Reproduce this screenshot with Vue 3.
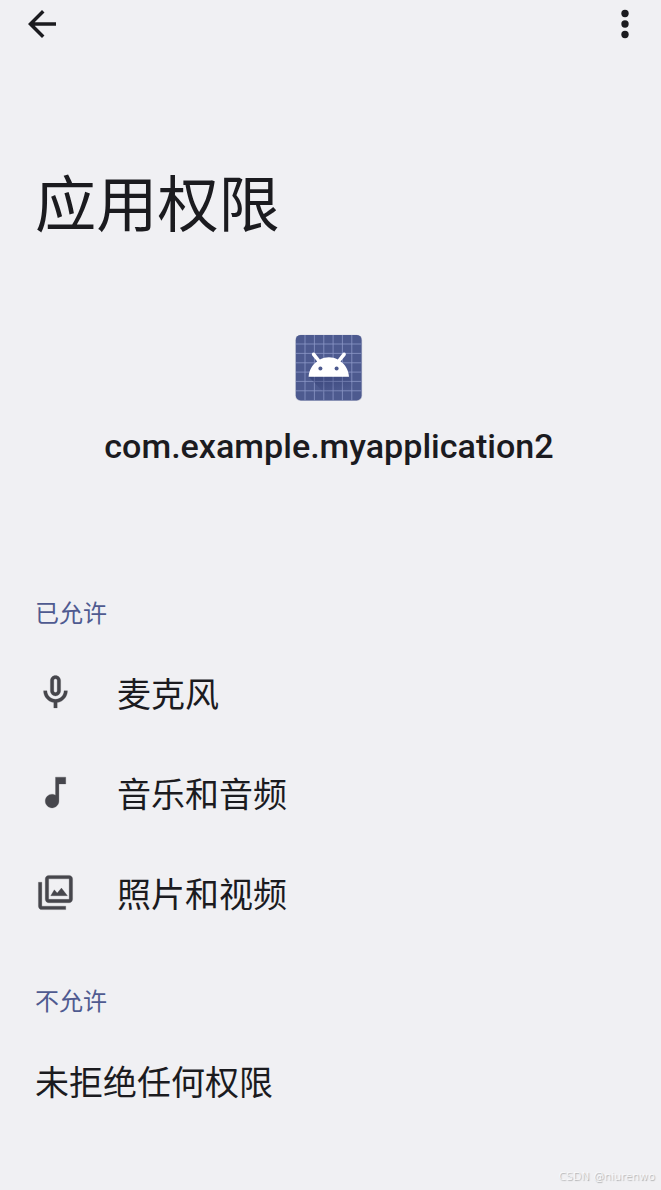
<template>
  <div class="page">
    <header class="toolbar">
      <button class="icon-btn" aria-label="返回">
        <svg class="icon" viewBox="0 0 24 24">
          <path d="M20 11H7.83l5.59-5.59L12 4l-8 8 8 8 1.41-1.41L7.83 13H20v-2z" />
        </svg>
      </button>
      <button class="icon-btn" aria-label="更多">
        <svg class="icon" viewBox="0 0 24 24">
          <circle cx="12" cy="6" r="2.1" />
          <circle cx="12" cy="12" r="2.1" />
          <circle cx="12" cy="18" r="2.1" />
        </svg>
      </button>
    </header>

    <h1 class="title">应用权限</h1>

    <section class="app">
      <svg class="app-icon" viewBox="0 0 68 68">
        <defs>
          <linearGradient id="shade" x1="0" y1="0" x2="0.5" y2="1">
            <stop offset="0" stop-color="#28336a" stop-opacity="0.5" />
            <stop offset="0.8" stop-color="#28336a" stop-opacity="0" />
          </linearGradient>
        </defs>
        <rect x="0.2" y="0.7" width="67" height="66.4" rx="5.5" fill="#c9cbd8" />
        <rect x="0.8" y="0.9" width="65.8" height="65.5" rx="5" fill="#4d5a8f" />
        <path class="grid" :d="gridPath" />
        <path d="M14 43 H54 L60 57 L50 66 H36 Z" fill="url(#shade)" />
        <path
          class="robot"
          d="M13.6 42.8 C14 36.2 17.2 30.6 22.2 27.4 L17.2 21.4 A1.7 1.7 0 0 1 20.1 19.2 L24.9 25.6 C30.6 22.6 37.3 22.6 42.8 25.6 L47.6 19.2 A1.7 1.7 0 0 1 50.5 21.4 L45.5 27.4 C50.5 30.6 53.6 36.2 54 42.8 Z"
        />
        <circle cx="25.4" cy="34.6" r="2" fill="#4d5a8f" />
        <circle cx="41.6" cy="34.6" r="2" fill="#4d5a8f" />
      </svg>
      <p class="app-name">com.example.myapplication2</p>
    </section>

    <h2 class="section">已允许</h2>
    <ul class="list">
      <li v-for="item in allowed" :key="item.label" class="row">
        <svg class="icon" viewBox="0 0 24 24">
          <path :d="item.icon" />
        </svg>
        <span>{{ item.label }}</span>
      </li>
    </ul>

    <h2 class="section denied">不允许</h2>
    <p class="empty">未拒绝任何权限</p>

    <div class="watermark">CSDN @niurenwo</div>
  </div>
</template>

<script setup>
const allowed = [
  {
    label: '麦克风',
    icon: 'M12 14c1.66 0 3-1.34 3-3V5c0-1.66-1.34-3-3-3S9 3.34 9 5v6c0 1.66 1.34 3 3 3zM11 5c0-.55.45-1 1-1s1 .45 1 1v6c0 .55-.45 1-1 1s-1-.45-1-1V5zM17 11c0 2.76-2.24 5-5 5s-5-2.24-5-5H5c0 3.53 2.61 6.43 6 6.92V21h2v-3.08c3.39-.49 6-3.39 6-6.92h-2z'
  },
  {
    label: '音乐和音频',
    icon: 'M12 3v10.55c-.59-.34-1.27-.55-2-.55-2.21 0-4 1.79-4 4s1.79 4 4 4 4-1.79 4-4V7h4V3h-6z'
  },
  {
    label: '照片和视频',
    icon: 'M20 4v12H8V4h12m0-2H8c-1.1 0-2 .9-2 2v12c0 1.1.9 2 2 2h12c1.1 0 2-.9 2-2V4c0-1.1-.9-2-2-2zM11.3 10.4l1.7 1.9 2.5-2.9L19 13.9H9.2l2.1-3.5zM2 6v14c0 1.1.9 2 2 2h14v-2H4V6H2z'
  }
];

// líneas de la cuadrícula del icono
const lines = [10, 19.4, 28.8, 38.1, 47.4, 56.8];
const gridPath = lines.map((n) => `M${n} 1V66.4M1 ${n}H66.4`).join('');
</script>

<style>
html, body { background: #f0f0f3; }
</style>

<style scoped>
.page {
  position: relative;
  box-sizing: border-box;
  width: 100%;
  height: 1190px;
  overflow: hidden;
  background: #f0f0f3;
  color: #1b1b1f;
  font-family: Roboto, "Noto Sans CJK SC", sans-serif;
}

h1, h2, p, ul {
  margin: 0;
  padding: 0;
  font-weight: 400;
}

.toolbar {
  display: flex;
  justify-content: space-between;
  padding: 3px 15px 0 21px;
}

.icon-btn {
  display: block;
  padding: 0;
  border: none;
  background: none;
  color: #1b1b1f;
}

.icon {
  display: block;
  flex: none;
  width: 41px;
  height: 41px;
  fill: currentColor;
}

.toolbar .icon {
  width: 42px;
  height: 42px;
}

.title {
  margin-top: 116px;
  padding-left: 35px;
  font-size: 61.2px;
  line-height: 90px;
}

.app {
  display: flex;
  flex-direction: column;
  align-items: center;
  margin-top: 83px;
  padding-right: 4px;
}

.app-icon {
  display: block;
  width: 68px;
  height: 68px;
}

.grid {
  fill: none;
  stroke: #8c97c6;
  stroke-width: 0.8;
}

.robot { fill: #fff; }

.app-name {
  margin-top: 24px;
  padding-left: 1px;
  font-size: 34.1px;
  font-weight: 500;
  line-height: 40px;
}

.section {
  margin-top: 128px;
  padding-left: 35px;
  color: #4f5a90;
  font-size: 24px;
  line-height: 40px;
}

.list {
  margin-top: 8px;
  list-style: none;
}

.row {
  display: flex;
  align-items: center;
  gap: 41.5px;
  height: 100px;
  padding-left: 34.5px;
  font-size: 34px;
}

.row .icon {
  color: #46464c;
  stroke: currentColor;
  stroke-width: 0.15;
}

.section.denied { margin-top: 40px; }

.empty {
  margin-top: 36px;
  padding-left: 35px;
  font-size: 34px;
  line-height: 50px;
}

.watermark {
  position: absolute;
  right: 6px;
  bottom: 5px;
  color: #fff;
  font-family: "DejaVu Sans", sans-serif;
  font-size: 11px;
  font-weight: 200;
  line-height: 16px;
  text-shadow: 1px 1px 1px #8c8c8c;
}
</style>
